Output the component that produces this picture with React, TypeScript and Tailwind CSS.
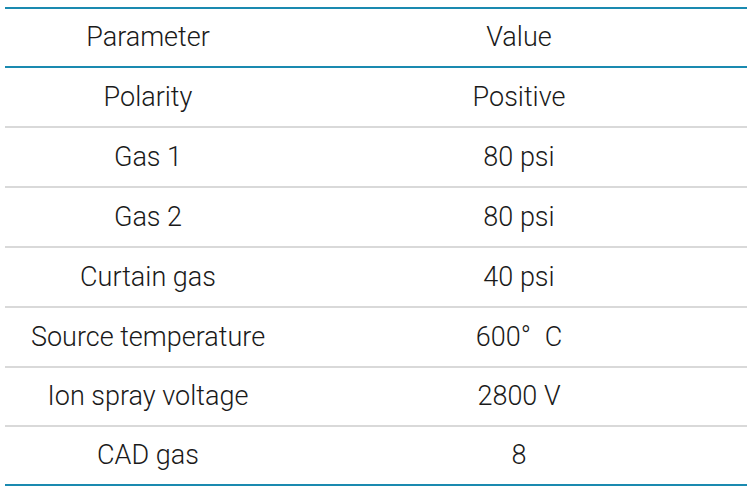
const rows: [string, string][] = [
  ['Polarity', 'Positive'],
  ['Gas 1', '80 psi'],
  ['Gas 2', '80 psi'],
  ['Curtain gas', '40 psi'],
  ['Source temperature', '600°\u2002C'],
  ['Ion spray voltage', '2800 V'],
  ['CAD gas', '8'],
];

const heights = ['h-[60px]', 'h-[60px]', 'h-[60px]', 'h-[60px]', 'h-[60px]', 'h-[59px]', 'h-[57px]'];

export default function App() {
  return (
    <div className="min-h-screen bg-white pl-[5px] pr-[3px] pt-[7px] font-['Roboto',sans-serif] font-light text-[27px] text-[#1a1a1a]">
      <div className="border-y-2 border-[#1a8ab0]">
        <div className="grid grid-cols-[286px_1fr] h-[59px] items-center border-b-2 border-[#1a8ab0] text-center">
          <div>Parameter</div>
          <div>Value</div>
        </div>
        {rows.map(([param, value], i) => (
          <div
            key={param}
            className={
              'grid grid-cols-[286px_1fr] items-center text-center ' +
              heights[i] +
              (i < rows.length - 1 ? ' border-b-2 border-[#d9d9d9]' : '')
            }
          >
            <div>{param}</div>
            <div>{value}</div>
          </div>
        ))}
      </div>
    </div>
  );
}
